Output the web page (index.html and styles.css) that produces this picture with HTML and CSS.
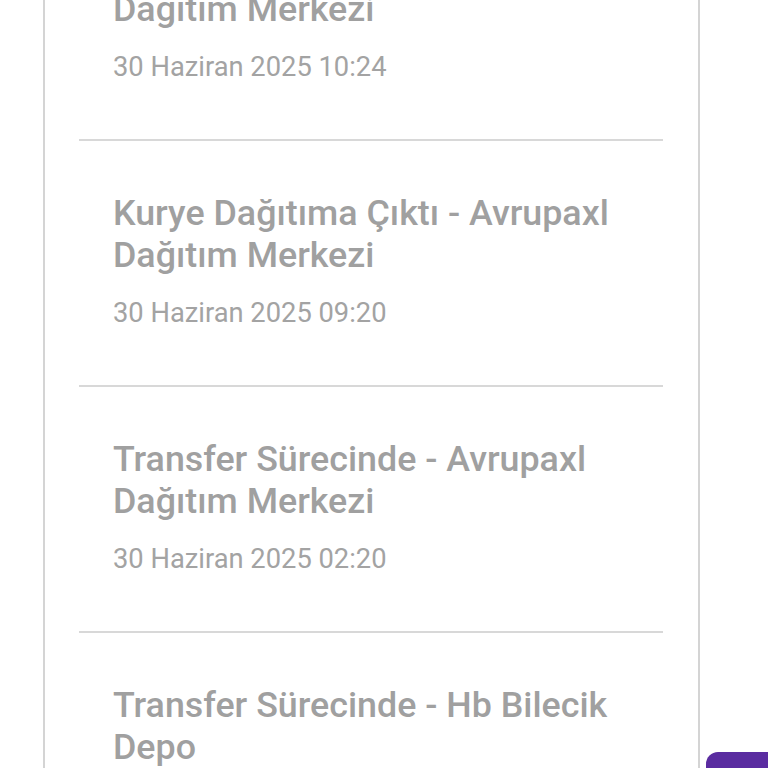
FILE: index.html
```html
<!doctype html>
<html lang="tr">
	<head>
		<meta charset="UTF-8">
		<title>Kargo Takip</title>
		<link rel="stylesheet" href="styles.css">
	</head>
	<body>
		<div class="card">
			<div class="step">
				<div class="title">Şubeye Ulaştı - Avrupaxl<br>Dağıtım Merkezi</div>
				<div class="date">30 Haziran 2025 10:24</div>
			</div>
			<div class="step">
				<div class="title">Kurye Dağıtıma Çıktı - Avrupaxl<br>Dağıtım Merkezi</div>
				<div class="date">30 Haziran 2025 09:20</div>
			</div>
			<div class="step">
				<div class="title">Transfer Sürecinde - Avrupaxl<br>Dağıtım Merkezi</div>
				<div class="date">30 Haziran 2025 02:20</div>
			</div>
			<div class="step">
				<div class="title">Transfer Sürecinde - Hb Bilecik<br>Depo</div>
				<div class="date">29 Haziran 2025 21:05</div>
			</div>
		</div>
		<div class="fab"></div>
	</body>
</html>
```

FILE: styles.css
```css
* {
	box-sizing: border-box;
}
body {
	margin: 0;
	background-color: white;
	font-family: Roboto, "Liberation Sans", sans-serif;
	overflow: hidden;
	height: 768px;
}
.card {
	margin: -105px 0 0 43px;
	width: 657px;
	border-left: 2px solid #d4d4d4;
	border-right: 2px solid #d4d4d4;
	padding: 0 35px 0 34px;
}
.step {
	border-bottom: 2px solid #d8d8d8;
	padding: 51px 0 54px 34px;
}
.title {
	color: #a0a0a0;
	font-size: 35.8px;
	font-weight: 500;
	line-height: 42px;
	white-space: nowrap;
}
.date {
	color: #a3a3a3;
	font-size: 27.3px;
	line-height: 36px;
	margin-top: 19px;
}
.fab {
	position: fixed;
	left: 706px;
	top: 752px;
	width: 90px;
	height: 60px;
	border-radius: 12px;
	background-color: #5a2ca0;
}
```
